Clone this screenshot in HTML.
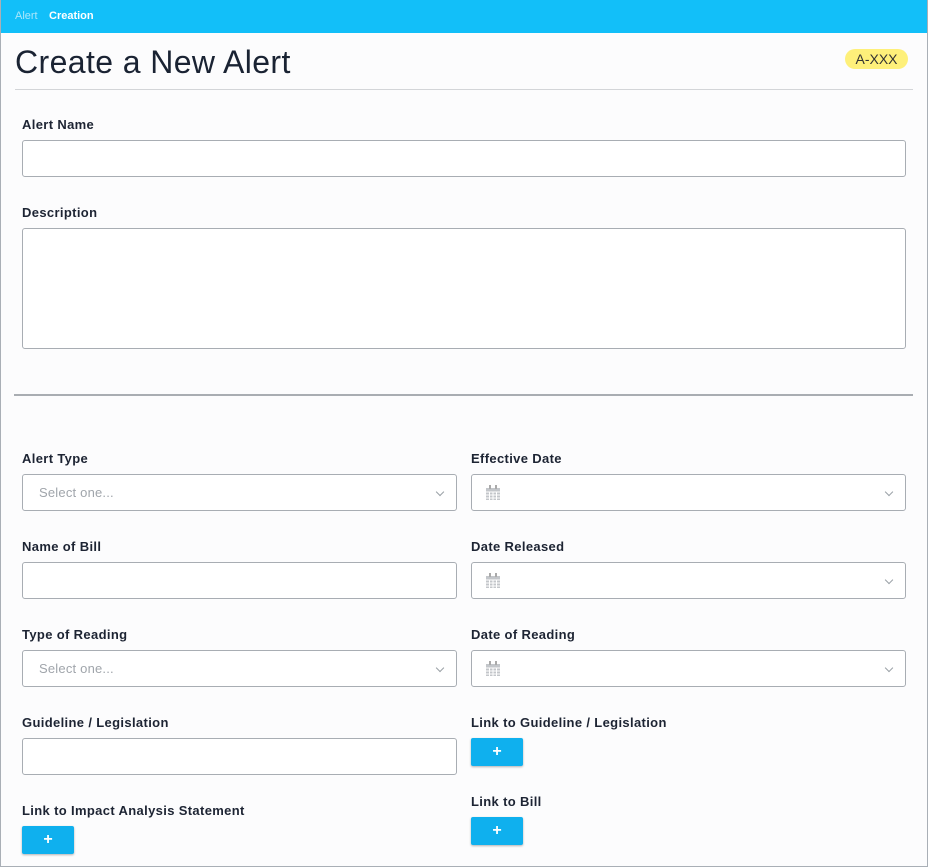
<!DOCTYPE html><html><head><style>
*{box-sizing:border-box;margin:0;padding:0}
body{width:928px;height:867px;background:#fcfcfd;font-family:"Liberation Sans",sans-serif;position:relative;overflow:hidden;color:#1d2433}
.frame{position:absolute;left:0;top:0;width:928px;height:867px;border:1px solid #a9afb6;border-top:none}
.bar{position:absolute;left:0;top:0;width:928px;height:33px;background:#12bff9}
.bar span{position:absolute;top:10px;font-size:11px}
.lab{position:absolute;font-size:13px;font-weight:bold;color:#1d2433;letter-spacing:0.35px}
.in{position:absolute;height:37px;border:1px solid #a8adb3;border-radius:3px;background:#fff}
.ph{position:absolute;left:16px;top:10px;font-size:13px;color:#a0a5ab;letter-spacing:0.2px}
.chev{position:absolute;right:13px;top:14px;width:6px;height:6px;border-right:1px solid #9aa0a6;border-bottom:1px solid #9aa0a6;transform:rotate(45deg)}
.cal{position:absolute;left:14px;top:10px}
.btn{position:absolute;width:52px;height:28px;background:#0fb0ee;border-radius:2px;box-shadow:0 1px 2px rgba(0,0,0,.3);color:#fff;font-weight:bold;font-size:16px;text-align:center;line-height:27px}
</style></head><body>
<div class="bar"><span style="left:15px;color:#a9e6fb">Alert</span><span style="left:49px;color:#fff;font-weight:bold">Creation</span></div>
<div style="position:absolute;left:15px;top:44px;font-size:32px;color:#1a2333;letter-spacing:0.4px">Create a New Alert</div>
<div style="position:absolute;left:845px;top:49px;width:63px;height:20px;background:#fef07a;border-radius:10px;font-size:14px;text-align:center;line-height:20px;color:#333">A-XXX</div>
<div style="position:absolute;left:15px;top:89px;width:898px;height:1px;background:#d3d5d8"></div>
<div class="lab" style="left:22px;top:117px">Alert Name</div>
<div class="in" style="left:22px;top:140px;width:884px"></div>
<div class="lab" style="left:22px;top:205px">Description</div>
<div class="in" style="left:22px;top:228px;width:884px;height:121px"></div>
<div style="position:absolute;left:14px;top:394px;width:899px;height:2px;background:#a9adb2"></div>

<div class="lab" style="left:22px;top:451px">Alert Type</div>
<div class="in" style="left:22px;top:474px;width:435px"><span class="ph">Select one...</span><i class="chev"></i></div>
<div class="lab" style="left:471px;top:451px">Effective Date</div>
<div class="in" style="left:471px;top:474px;width:435px"><svg class="cal" width="14" height="15" viewBox="0 0 14 15"><rect x="0" y="3" width="14" height="12" fill="#c3c6ca"/><path d="M0 7h14M0 10h14M0 13h14M3.5 7v8M7 7v8M10.5 7v8" stroke="#fff" stroke-width="1"/><rect x="3" y="0" width="2" height="4" fill="#aaa"/><rect x="9" y="0" width="2" height="4" fill="#aaa"/></svg><i class="chev"></i></div>

<div class="lab" style="left:22px;top:539px">Name of Bill</div>
<div class="in" style="left:22px;top:562px;width:435px"></div>
<div class="lab" style="left:471px;top:539px">Date Released</div>
<div class="in" style="left:471px;top:562px;width:435px"><svg class="cal" width="14" height="15" viewBox="0 0 14 15"><rect x="0" y="3" width="14" height="12" fill="#c3c6ca"/><path d="M0 7h14M0 10h14M0 13h14M3.5 7v8M7 7v8M10.5 7v8" stroke="#fff" stroke-width="1"/><rect x="3" y="0" width="2" height="4" fill="#aaa"/><rect x="9" y="0" width="2" height="4" fill="#aaa"/></svg><i class="chev"></i></div>

<div class="lab" style="left:22px;top:627px">Type of Reading</div>
<div class="in" style="left:22px;top:650px;width:435px"><span class="ph">Select one...</span><i class="chev"></i></div>
<div class="lab" style="left:471px;top:627px">Date of Reading</div>
<div class="in" style="left:471px;top:650px;width:435px"><svg class="cal" width="14" height="15" viewBox="0 0 14 15"><rect x="0" y="3" width="14" height="12" fill="#c3c6ca"/><path d="M0 7h14M0 10h14M0 13h14M3.5 7v8M7 7v8M10.5 7v8" stroke="#fff" stroke-width="1"/><rect x="3" y="0" width="2" height="4" fill="#aaa"/><rect x="9" y="0" width="2" height="4" fill="#aaa"/></svg><i class="chev"></i></div>

<div class="lab" style="left:22px;top:715px">Guideline / Legislation</div>
<div class="in" style="left:22px;top:738px;width:435px"></div>
<div class="lab" style="left:471px;top:715px">Link to Guideline / Legislation</div>
<div class="btn" style="left:471px;top:738px">+</div>
<div class="lab" style="left:471px;top:794px">Link to Bill</div>
<div class="btn" style="left:471px;top:817px">+</div>
<div class="lab" style="left:22px;top:803px">Link to Impact Analysis Statement</div>
<div class="btn" style="left:22px;top:826px">+</div>
<div class="frame"></div>
</body></html>
